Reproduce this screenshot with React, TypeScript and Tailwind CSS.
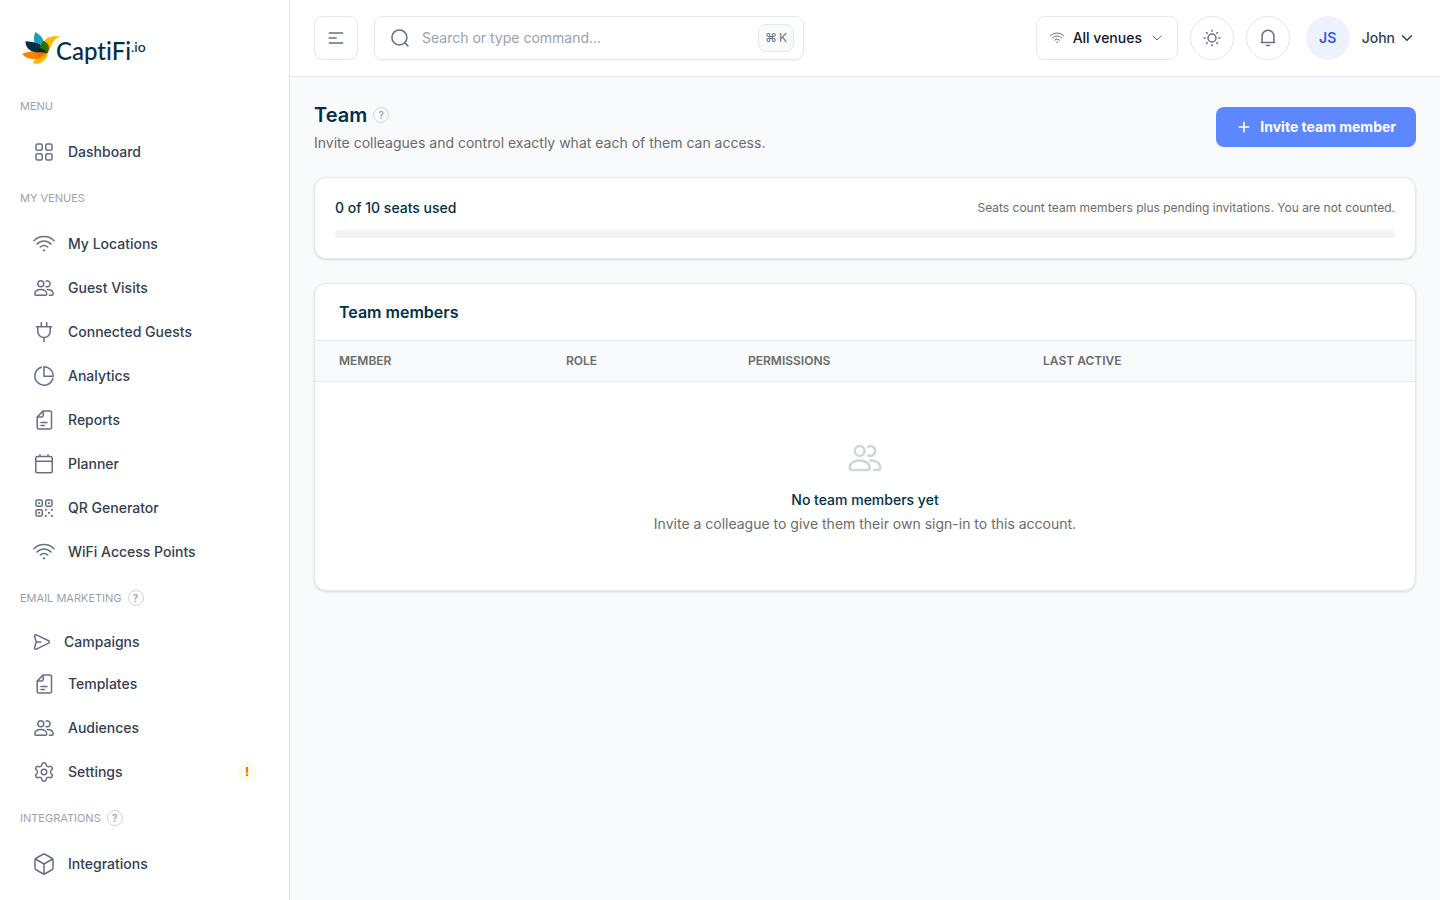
import React from "react";
import { Box, ChevronDown, Plus, Settings } from "lucide-react";

type IconProps = {
  className?: string;
};

type NavItem = {
  name: string;
  icon: React.ReactNode;
  alert?: boolean;
};

type NavGroup = {
  title: string;
  help?: boolean;
  items: NavItem[];
};

const Svg = ({
  className = "size-6",
  size = 24,
  stroke = 1.5,
  children,
}: IconProps & { size?: number; stroke?: number; children: React.ReactNode }) => (
  <svg
    className={`${className} shrink-0`}
    viewBox={`0 0 ${size} ${size}`}
    fill="none"
    stroke="currentColor"
    strokeWidth={stroke}
    strokeLinecap="round"
    strokeLinejoin="round"
    aria-hidden="true"
  >
    {children}
  </svg>
);

const GridIcon = () => (
  <Svg>
    <rect x="4" y="4" width="6.25" height="6.25" rx="1.5" />
    <rect x="13.75" y="4" width="6.25" height="6.25" rx="1.5" />
    <rect x="4" y="13.75" width="6.25" height="6.25" rx="1.5" />
    <rect x="13.75" y="13.75" width="6.25" height="6.25" rx="1.5" />
  </Svg>
);

const WifiIcon = ({ className }: IconProps) => (
  <Svg className={className}>
    <path d="M8.288 15.038a5.25 5.25 0 0 1 7.424 0M5.106 11.856c3.807-3.808 9.98-3.808 13.788 0M1.924 8.674c5.565-5.565 14.587-5.565 20.152 0M12.53 18.22l-.53.53-.53-.53a.75.75 0 0 1 1.06 0Z" />
  </Svg>
);

const UsersIcon = ({ className }: IconProps) => (
  <Svg className={className}>
    <circle cx="8.8" cy="7.8" r="2.95" />
    <path d="M8.8 13.5c-3.6 0-5.95 1.8-5.95 4.5 0 .75.45 1.2 1.2 1.2h9.5c.75 0 1.2-.45 1.2-1.2 0-2.7-2.35-4.5-5.95-4.5Z" />
    <path d="M14 5.1a2.95 2.95 0 1 1 0 5.4" />
    <path d="M15.2 13.5c3.6 0 5.95 1.8 5.95 4.5 0 .75-.45 1.2-1.2 1.2H17.4" />
  </Svg>
);

const PlugIcon = () => (
  <Svg>
    <path d="M4.3 6.75h15.4M9.25 2.75v4M14.75 2.75v4M5.75 6.75v4.5a6.25 6.25 0 0 0 12.5 0v-4.5M12 17.5v4" />
  </Svg>
);

const PieIcon = () => (
  <Svg>
    <path d="M9.4 3.2a9.2 9.2 0 1 0 11.5 11.3" />
    <path d="M12 2.8v9.4h9.3A9.3 9.3 0 0 0 12 2.8Z" />
  </Svg>
);

const DocIcon = () => (
  <Svg>
    <path d="M11.2 2.9H18c.9 0 1.5.6 1.5 1.5v15.2c0 .9-.6 1.5-1.5 1.5H6.7c-.9 0-1.5-.6-1.5-1.5V9l6-6.1Z" />
    <path d="M11.2 3.2v4.3c0 .8-.6 1.4-1.4 1.4H5.5M9 14.4h6M9 17.4h3.2" />
  </Svg>
);

const CalendarIcon = () => (
  <Svg>
    <rect x="3.75" y="4.5" width="16.5" height="16.25" rx="1.75" />
    <path d="M3.75 9.2h16.5M8 2.75V4.5M16 2.75V4.5" />
  </Svg>
);

const QrIcon = () => (
  <Svg>
    <rect x="4" y="4" width="6.25" height="6.25" rx="1.25" />
    <rect x="13.75" y="4" width="6.25" height="6.25" rx="1.25" />
    <rect x="4" y="13.75" width="6.25" height="6.25" rx="1.25" />
    <g fill="currentColor" stroke="none">
      <rect x="6.2" y="6.2" width="1.9" height="1.9" />
      <rect x="15.9" y="6.2" width="1.9" height="1.9" />
      <rect x="6.2" y="15.9" width="1.9" height="1.9" />
      <rect x="13" y="13" width="1.8" height="1.8" />
      <rect x="19" y="13" width="1.8" height="1.8" />
      <rect x="16" y="16" width="1.9" height="1.9" />
      <rect x="13" y="19" width="1.8" height="1.8" />
      <rect x="19" y="19" width="1.8" height="1.8" />
    </g>
  </Svg>
);

const SendIcon = () => (
  <Svg className="size-5" size={20}>
    <path d="M4.4 2.9 16.6 8.8c1 .5 1 1.9 0 2.4L4.4 17.1c-1.1.5-2.2-.5-1.8-1.7L4.3 10 2.6 4.6c-.4-1.2.7-2.2 1.8-1.7ZM4.3 10h4.6" />
  </Svg>
);

const MenuIcon = () => (
  <Svg className="size-5" size={20}>
    <path d="M3.3 4.9h13.4M3.3 10h6.9M3.3 15.1h13.4" />
  </Svg>
);

const SearchIcon = () => (
  <Svg className="size-5" size={20}>
    <circle cx="9.4" cy="9.4" r="7.5" />
    <path d="m14.8 14.8 3.1 3.1" />
  </Svg>
);

const SunIcon = () => (
  <Svg className="size-5" size={20}>
    <circle cx="10" cy="10" r="4" />
    <path d="M10 2.2v1M10 16.8v1M2.2 10h1M16.8 10h1M4.5 4.5l.7.7M14.8 14.8l.7.7M4.5 15.5l.7-.7M14.8 5.2l.7-.7" />
  </Svg>
);

const BellIcon = () => (
  <Svg className="size-5" size={20}>
    <path d="M10 2.2a5.9 5.9 0 0 0-5.9 5.9v6.5h11.8V8.1A5.9 5.9 0 0 0 10 2.2ZM3.3 14.6h13.4M8.6 17.6h2.8" />
  </Svg>
);

const navGroups: NavGroup[] = [
  { title: "MENU", items: [{ name: "Dashboard", icon: <GridIcon /> }] },
  {
    title: "MY VENUES",
    items: [
      { name: "My Locations", icon: <WifiIcon /> },
      { name: "Guest Visits", icon: <UsersIcon /> },
      { name: "Connected Guests", icon: <PlugIcon /> },
      { name: "Analytics", icon: <PieIcon /> },
      { name: "Reports", icon: <DocIcon /> },
      { name: "Planner", icon: <CalendarIcon /> },
      { name: "QR Generator", icon: <QrIcon /> },
      { name: "WiFi Access Points", icon: <WifiIcon /> },
    ],
  },
  {
    title: "EMAIL MARKETING",
    help: true,
    items: [
      { name: "Campaigns", icon: <SendIcon /> },
      { name: "Templates", icon: <DocIcon /> },
      { name: "Audiences", icon: <UsersIcon /> },
      {
        name: "Settings",
        icon: <Settings className="m-px size-[22px] shrink-0" strokeWidth={1.6} />,
        alert: true,
      },
    ],
  },
  {
    title: "INTEGRATIONS",
    help: true,
    items: [
      {
        name: "Integrations",
        icon: <Box className="size-6 shrink-0" strokeWidth={1.5} />,
      },
    ],
  },
];

const HelpButton = () => (
  <button
    type="button"
    aria-label="Help"
    className="flex size-4 items-center justify-center rounded-full border border-[#d0d5dd] text-[10px] leading-none font-semibold text-[#98a2b3]"
  >
    ?
  </button>
);

const Logo = () => (
  <a
    href="#"
    className="flex h-8 items-start font-[Lato,sans-serif] font-medium text-[#023047] [font-variant-ligatures:none]"
  >
    <svg className="h-8 w-[42px] shrink-0" viewBox="0 0 42 32" aria-hidden="true">
      <path d="M15.3 0c4 2.2 7.2 5 7.8 8.2l-4.6 8C14 13 12.5 7 15.3 0Z" fill="#219ebc" />
      <path d="M41 4.6c-5-.6-11-.6-14.3 1.8-3 2.3-4.7 5.4-6.7 9.6l7.5 5c4.5-3.5 2.5-13.5 13.5-16.4Z" fill="#ffb703" />
      <path d="M13 31.3c1.2-5 5.5-9.3 14.5-10.3.3 6-6 12.2-14.5 10.3Z" fill="#ffb703" />
      <path d="M2 22c6-3 14-3.7 25.5-1-5 6-18 9.5-25.5 1Z" fill="#fb8500" />
      <path d="M5.5 9.3c8 .4 17 2 22 11.7-9 .4-22 0-22-11.7Z" fill="#023047" />
      <path d="M23 8.500c6.3 2.8 7.3 7.500 4.500 12.500-2.500-2-5.500-4-8-5 1-3 2-5 3.500-7.500Z" fill="#287300" />
      <path d="M19.5 15.8c3.3 1.2 6 3 8 5.2-4 .3-7.5 0-10.5-.6Z" fill="#0a2a10" />
      <path d="M17 20.3c3.5-.3 7-.1 10.5.7-4.5.8-8.5 2.5-11.2 5.6Z" fill="#ff6a00" />
    </svg>
    <span className="-ml-[6px] text-2xl leading-[38px]">CaptiFi</span>
    <span className="text-sm leading-[30px]">.io</span>
  </a>
);

const Sidebar = () => (
  <aside className="flex w-[290px] shrink-0 flex-col border-r border-[#e4e7ec] bg-white px-5 pt-8">
    <Logo />
    <nav className="mt-8 flex flex-col gap-4 pb-4">
      {navGroups.map((group) => (
        <section key={group.title}>
          <div className="mb-4 flex items-center gap-[6px]">
            <h2 className="text-[11px] leading-5 font-normal text-[#98a2b3]">
              {group.title}
            </h2>
            {group.help && <HelpButton />}
          </div>
          <ul className="flex flex-col gap-1">
            {group.items.map((item) => (
              <li key={item.name}>
                <a
                  href="#"
                  className="flex items-center gap-3 rounded-lg px-3 py-2 text-sm font-medium text-[#344054]"
                >
                  <span className="text-[#667085]">{item.icon}</span>
                  <span>{item.name}</span>
                  {item.alert && (
                    <span className="ml-auto flex size-5 items-center justify-center rounded-full bg-[#fffaeb] text-xs font-bold text-[#dc6803]">
                      !
                    </span>
                  )}
                </a>
              </li>
            ))}
          </ul>
        </section>
      ))}
    </nav>
  </aside>
);

const Header = () => (
  <header className="flex items-center border-b border-[#e4e7ec] bg-white px-6 py-4">
    <button
      type="button"
      aria-label="Toggle sidebar"
      className="flex size-11 items-center justify-center rounded-lg border border-[#e4e7ec] text-[#667085]"
    >
      <MenuIcon />
    </button>
    <label className="ml-4 flex h-11 w-[430px] items-center rounded-lg border border-[#e4e7ec] pr-[9px] pl-[15px] text-[#667085] shadow-xs">
      <SearchIcon />
      <input
        type="text"
        aria-label="Search"
        placeholder="Search or type command..."
        className="ml-3 min-w-0 flex-1 text-sm text-[#344054] outline-none placeholder:text-[#98a2b3]"
      />
      <kbd className="flex h-7 w-9 items-center justify-center gap-[2px] rounded-lg border border-[#e4e7ec] bg-[#f9fafb] font-[Inter,sans-serif] text-xs">
        <span>⌘</span>
        <span>K</span>
      </kbd>
    </label>
    <div className="ml-auto flex items-center gap-3">
      <label className="flex h-11 items-center rounded-lg border border-[#e4e7ec] px-3 text-[#667085]">
        <WifiIcon className="size-4" />
        <select
          aria-label="Venue"
          className="ml-2 appearance-none text-sm font-medium text-[#101828] outline-none"
        >
          <option>All venues</option>
        </select>
        <ChevronDown className="ml-[6px] size-4" strokeWidth={1.5} />
      </label>
      <button
        type="button"
        aria-label="Toggle theme"
        className="flex size-11 items-center justify-center rounded-full border border-[#e4e7ec] text-[#667085]"
      >
        <SunIcon />
      </button>
      <button
        type="button"
        aria-label="Notifications"
        className="flex size-11 items-center justify-center rounded-full border border-[#e4e7ec] text-[#667085]"
      >
        <BellIcon />
      </button>
      <button
        type="button"
        className="ml-1 flex items-center text-sm font-medium text-[#344054]"
      >
        <span className="mr-3 flex size-11 items-center justify-center rounded-full bg-[#eef2ff] font-semibold text-[#2f5be7]">
          JS
        </span>
        John
        <ChevronDown className="ml-[3px] size-[18px]" strokeWidth={2} />
      </button>
    </div>
  </header>
);

const SeatsCard = () => (
  <section className="rounded-xl border border-[#e4e7ec] bg-white p-5 shadow-sm">
    <div className="flex items-center justify-between">
      <p className="text-sm font-medium text-[#023047]">0 of 10 seats used</p>
      <p className="text-xs text-[#6b6b6b]">
        Seats count team members plus pending invitations. You are not counted.
      </p>
    </div>
    <div
      role="progressbar"
      aria-label="Seats used"
      aria-valuenow={0}
      aria-valuemax={10}
      className="mt-3 h-2 rounded-full bg-[#f2f4f7]"
    />
  </section>
);

const MembersCard = () => (
  <section className="overflow-hidden rounded-xl border border-[#e4e7ec] bg-white shadow-sm">
    <h2 className="border-b border-[#e4e7ec] px-6 py-4 text-base font-semibold text-[#023047]">
      Team members
    </h2>
    <table className="w-full table-fixed text-left">
      <thead className="border-b border-[#e4e7ec] bg-[#f9fafb] text-xs text-[#6b6b6b]">
        <tr>
          <th className="w-[227px] px-6 py-3 font-semibold">MEMBER</th>
          <th className="w-[182px] px-6 py-3 font-semibold">ROLE</th>
          <th className="w-[295px] px-6 py-3 font-semibold">PERMISSIONS</th>
          <th className="px-6 py-3 font-semibold">LAST ACTIVE</th>
        </tr>
      </thead>
      <tbody>
        <tr>
          <td colSpan={4} className="px-6 py-14 text-center text-sm">
            <div className="flex justify-center text-[#d0d5dd]">
              <UsersIcon className="size-10" />
            </div>
            <p className="mt-3 font-medium text-[#023047]">
              No team members yet
            </p>
            <p className="mt-1 text-[#6b6b6b]">
              Invite a colleague to give them their own sign-in to this account.
            </p>
          </td>
        </tr>
      </tbody>
    </table>
  </section>
);

export default function App() {
  return (
    <div className="flex min-h-screen bg-[#f9fafb] font-[Inter,sans-serif]">
      <Sidebar />
      <div className="flex min-w-0 flex-1 flex-col">
        <Header />
        <main className="flex flex-col gap-6 p-6">
          <div className="flex items-center justify-between">
            <div>
              <div className="flex items-center gap-[6px]">
                <h1 className="text-xl leading-7 font-semibold text-[#023047]">
                  Team
                </h1>
                <HelpButton />
              </div>
              <p className="mt-1 text-sm text-[#6b6b6b]">
                Invite colleagues and control exactly what each of them can
                access.
              </p>
            </div>
            <button
              type="button"
              className="flex h-10 items-center gap-2 rounded-lg bg-[#5d87ff] px-5 text-sm font-bold text-white"
            >
              <Plus className="size-4" strokeWidth={2.5} />
              Invite team member
            </button>
          </div>
          <SeatsCard />
          <MembersCard />
        </main>
      </div>
    </div>
  );
}
